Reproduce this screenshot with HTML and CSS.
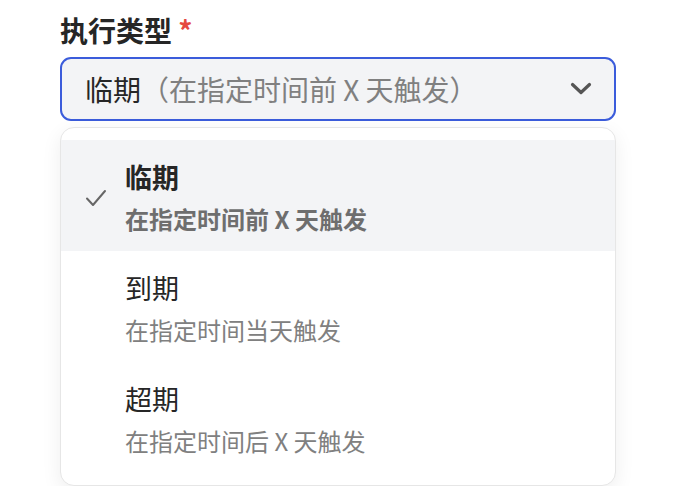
FILE: index.html
```html
<!DOCTYPE html>
<html lang="zh-CN">
<head>
<meta charset="utf-8">
<link rel="stylesheet" href="styles.css">
</head>
<body>
<div class="field">
  <div class="label">执行类型 <span class="req">*</span></div>
  <div class="select">
    <span class="value">临期</span><span class="hint">（在指定时间前 X 天触发）</span>
    <svg class="chev" width="22" height="14" viewBox="0 0 22 14"><path d="M2.5 2.5 L11 10.5 L19.5 2.5" fill="none" stroke="#555" stroke-width="3.2" stroke-linecap="round" stroke-linejoin="round"/></svg>
  </div>
  <div class="menu">
    <div class="option selected">
      <div class="check">
        <svg width="22" height="20" viewBox="0 0 22 20"><path d="M2 10.5 L8 17 L20 3" fill="none" stroke="#666" stroke-width="2" stroke-linecap="round" stroke-linejoin="round"/></svg>
      </div>
      <div class="texts">
        <div class="title">临期</div>
        <div class="sub">在指定时间前 X 天触发</div>
      </div>
    </div>
    <div class="option">
      <div class="check"></div>
      <div class="texts">
        <div class="title">到期</div>
        <div class="sub">在指定时间当天触发</div>
      </div>
    </div>
    <div class="option">
      <div class="check"></div>
      <div class="texts">
        <div class="title">超期</div>
        <div class="sub">在指定时间后 X 天触发</div>
      </div>
    </div>
  </div>
</div>
</body>
</html>
```
FILE: styles.css
```css
html, body {
  margin: 0;
  padding: 0;
  background: #ffffff;
}
body {
  font-family: "Noto Sans CJK SC", "Noto Sans", sans-serif;
  color: #222;
}
.field {
  width: 556px;
  margin-left: 60px;
  padding-top: 12px;
}
.label {
  font-size: 28px;
  font-weight: 700;
  line-height: 36px;
  color: #262626;
  height: 36px;
}
.req {
  color: #e5483f;
}
.select {
  margin-top: 9px;
  box-sizing: border-box;
  height: 64px;
  border: 2px solid #3b5cdb;
  border-radius: 11px;
  background: #f3f4f6;
  display: flex;
  align-items: center;
  padding: 0 22px 0 23px;
  font-size: 28px;
  line-height: 36px;
}
.value {
  color: #262626;
}
.hint {
  color: #808080;
  flex: 1;
}
.chev {
  display: block;
}
.menu {
  margin-top: 6px;
  box-sizing: border-box;
  border: 1px solid #e6e6e6;
  border-radius: 14px;
  background: #fff;
  box-shadow: 0 6px 20px rgba(0, 0, 0, 0.07);
  padding: 12px 0;
}
.option {
  display: flex;
  align-items: center;
  padding: 18px 0 13px 0;
}
.option.selected {
  background: #f3f4f6;
}
.check {
  width: 40px;
  padding-left: 24px;
  display: flex;
  align-items: center;
}
.check svg {
  display: block;
}
.texts {
  display: flex;
  flex-direction: column;
  gap: 4px;
}
.title {
  font-size: 27px;
  line-height: 38px;
  color: #262626;
}
.sub {
  font-size: 24px;
  line-height: 38px;
  color: #808080;
}
.selected .title {
  font-weight: 700;
}
.selected .sub {
  font-weight: 700;
  color: #6e6e6e;
}
```
